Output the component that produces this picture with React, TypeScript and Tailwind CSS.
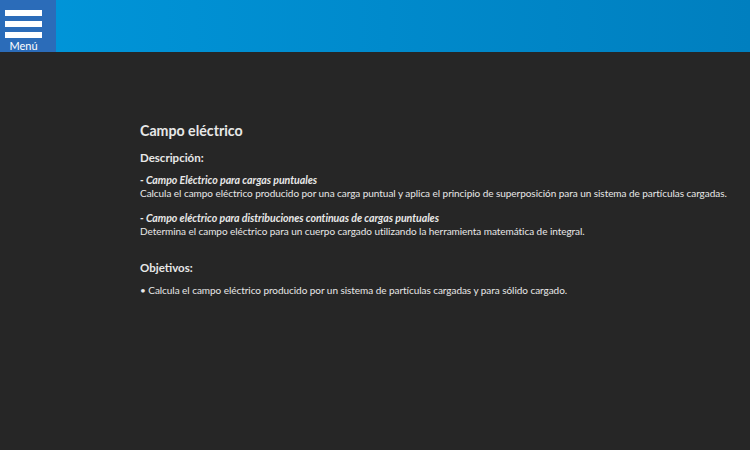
import React from 'react';

export default function App() {
  return (
    <div
      className="w-[750px] h-[450px] flex flex-col bg-[#262626] overflow-hidden"
      style={{ fontFamily: 'Lato, "Open Sans", sans-serif' }}
    >
      <header className="h-[52px] flex bg-gradient-to-r from-[#0096da] to-[#007fbf]">
        <div className="w-[56px] h-full bg-[#2b6cb9] pl-[5px] pt-[10px]">
          <div className="w-[37px] flex flex-col items-center">
            <div className="w-[37px] h-[6px] bg-white" />
            <div className="w-[37px] h-[6px] bg-white mt-[5px]" />
            <div className="w-[37px] h-[6px] bg-white mt-[5px]" />
            <span className="text-white text-[11px] leading-none mt-[2px]">Menú</span>
          </div>
        </div>
      </header>
      <main className="pl-[140px] pt-[70px] text-[#e8e8e8]">
        <h1 className="text-[14.2px] font-bold leading-[18px]">Campo eléctrico</h1>
        <h2 className="text-[11.5px] font-bold leading-[16px] mt-[10px]">Descripción:</h2>
        <div className="text-[10px] leading-[13px] tracking-[-0.05px] mt-[8px]">
          <p className="italic font-bold text-[10.6px]">- Campo Eléctrico para cargas puntuales</p>
          <p>Calcula el campo eléctrico producido por una carga puntual y aplica el principio de superposición para un sistema de partículas cargadas.</p>
        </div>
        <div className="text-[10px] leading-[13px] tracking-[-0.05px] mt-[12px]">
          <p className="italic font-bold text-[10.6px]">- Campo eléctrico para distribuciones continuas de cargas puntuales</p>
          <p>Determina el campo eléctrico para un cuerpo cargado utilizando la herramienta matemática de integral.</p>
        </div>
        <h2 className="text-[11.5px] font-bold leading-[16px] mt-[22px]">Objetivos:</h2>
        <p className="text-[10px] leading-[13px] tracking-[-0.05px] mt-[8px]">• Calcula el campo eléctrico producido por un sistema de partículas cargadas y para sólido cargado.</p>
      </main>
    </div>
  );
}
